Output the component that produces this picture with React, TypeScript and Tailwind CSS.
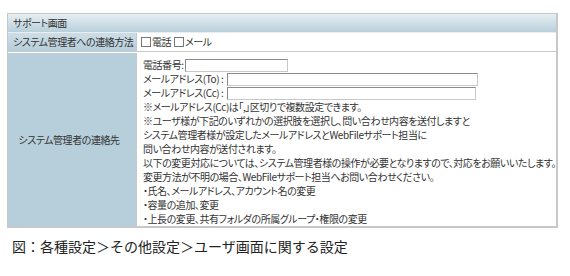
export default function App() {
  const jp = "font-['Noto_Sans_CJK_JP','Noto_Sans',sans-serif] [font-feature-settings:'palt'] tracking-[-0.45px]";
  const inputCls =
    'inline-block align-middle h-[13px] border border-[#8a8a8a] border-r-[#c8c8c8] border-b-[#c8c8c8] bg-white';

  return (
    <div className="w-[570px] h-[276px] bg-white pt-[13px] pl-[7px]">
      <div className={`w-[551px] border border-[#c8c8c8] border-r-2 border-b-2 text-[10px] leading-none text-[#333] ${jp}`}>
        {/* header */}
        <div className="h-[19px] flex items-center pl-[5px] bg-gradient-to-b from-[#e6eef2] to-[#b9d0dc] border-b border-[#e8eef1]">
          サポート画面
        </div>

        {/* contact method */}
        <div className="grid grid-cols-[129px_1fr] border-b border-[#c8c8c8]">
          <div className="h-[18px] flex items-center pl-[5px] whitespace-nowrap bg-gradient-to-b from-[#cddde6] to-[#b7cedb] border-r border-[#c8c8c8]">
            システム管理者への連絡方法
          </div>
          <div className="flex items-center pl-[4px] gap-[1px]">
            <span className="inline-block w-[10px] h-[10px] border border-[#777] bg-white" />
            <span className="mr-[2px]">電話</span>
            <span className="inline-block w-[10px] h-[10px] border border-[#777] bg-white" />
            <span>メール</span>
          </div>
        </div>

        {/* contact details */}
        <div className="grid grid-cols-[129px_1fr] border-t border-white">
          <div className="flex items-center justify-center bg-[#b7cedb] border-r border-[#c8c8c8] pr-[6px]">
            システム管理者の連絡先
          </div>
          <div className="pl-[6px] pt-[5px] leading-[14px] whitespace-nowrap">
            <div className="flex items-center h-[14px]">
              電話番号:
              <span className={`${inputCls} w-[103px] ml-[1px]`} />
            </div>
            <div className="flex items-center h-[14px]">
              メールアドレス(To) :
              <span className={`${inputCls} w-[251px] ml-[4px]`} />
            </div>
            <div className="flex items-center h-[14px]">
              メールアドレス(Cc) :
              <span className={`${inputCls} w-[249px] ml-[4px]`} />
            </div>
            <div>※メールアドレス(Cc)は「,」区切りで複数設定できます。</div>
            <div>※ユーザ様が下記のいずれかの選択肢を選択し、問い合わせ内容を送付しますと</div>
            <div>システム管理者様が設定したメールアドレスとWebFileサポート担当に</div>
            <div>問い合わせ内容が送付されます。</div>
            <div>以下の変更対応については、システム管理者様の操作が必要となりますので、対応をお願いいたします。</div>
            <div>変更方法が不明の場合、WebFileサポート担当へお問い合わせください。</div>
            <div>・氏名、メールアドレス、アカウント名の変更</div>
            <div>・容量の追加、変更</div>
            <div>・上長の変更、共有フォルダの所属グループ・権限の変更</div>
          </div>
        </div>
      </div>

      <div className="mt-[8px] pl-[5px] text-[14px] leading-[20px] text-[#222] font-['Noto_Sans_CJK_JP',sans-serif]">
        図：各種設定＞その他設定＞ユーザ画面に関する設定
      </div>
    </div>
  );
}
